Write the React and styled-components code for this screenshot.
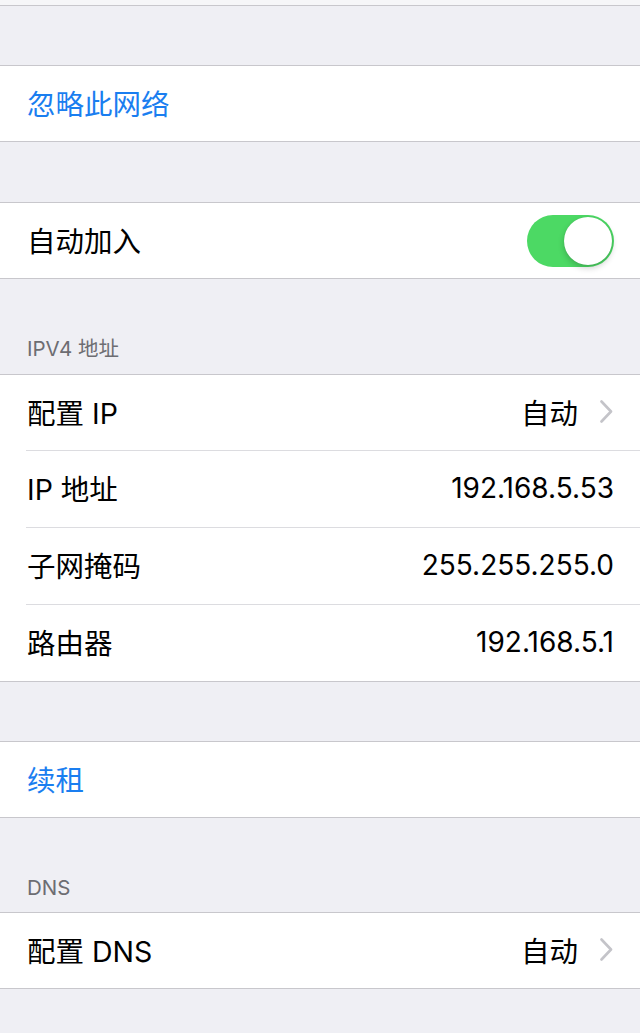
import React from "react";
import styled, { createGlobalStyle } from "styled-components";

const Global = createGlobalStyle`
  html, body {
    margin: 0;
    padding: 0;
    background: #efeff4;
  }
  body {
    font-family: "Inter", "Noto Sans CJK SC", sans-serif;
    -webkit-font-smoothing: antialiased;
  }
`;

const Page = styled.div`
  width: 640px;
  min-height: 1033px;
  background: #efeff4;
  display: flex;
  flex-direction: column;
`;

const TopStrip = styled.div`
  height: 5px;
  background: #f6f6f8;
  border-bottom: 1px solid #c8c7cc;
`;

const Gap = styled.div`
  height: ${(p) => p.$h}px;
`;

const SectionHeader = styled.div`
  height: ${(p) => p.$h}px;
  display: flex;
  align-items: flex-end;
  box-sizing: border-box;
  padding: 0 27px 12px;
  font-size: 20.5px;
  color: #6d6d72;
`;

const Group = styled.div`
  background: #fff;
  border-top: 1px solid #c8c7cc;
  border-bottom: 1px solid #c8c7cc;
  display: flex;
  flex-direction: column;
`;

const Row = styled.div`
  height: 75px;
  display: flex;
  align-items: center;
  padding: 0 26px 3px 27px;
  box-sizing: border-box;
  & + & {
    border-top: 1px solid #dcdce0;
    height: 77px;
    margin-left: 26px;
    padding-left: 1px;
  }
`;

const Label = styled.span`
  flex: 1;
  font-size: 28.5px;
  color: ${(p) => (p.$action ? "#1a7ef0" : "#000")};
`;

const Value = styled.span`
  font-size: ${(p) => (p.$num ? "28px" : "28.5px")};
  color: #000;
`;

const Chevron = styled.svg`
  width: 13px;
  height: 23px;
  margin-left: 22px;
  margin-right: 1px;
  flex: none;
`;

const Switch = styled.div`
  position: relative;
  width: 87px;
  height: 52px;
  border-radius: 26px;
  background: #4cd964;
  flex: none;
  margin-top: 3px;
`;

const Knob = styled.div`
  position: absolute;
  top: 2px;
  right: 2px;
  width: 48px;
  height: 48px;
  border-radius: 50%;
  background: #fff;
  box-shadow: 0 3px 6px rgba(0, 0, 0, 0.2), 0 0 1px rgba(0, 0, 0, 0.15);
`;

function Arrow() {
  return (
    <Chevron viewBox="0 0 13 23">
      <path
        d="M1.5 1.5 L11 11.5 L1.5 21.5"
        fill="none"
        stroke="#c4c4c9"
        strokeWidth="2.6"
        strokeLinecap="round"
        strokeLinejoin="round"
      />
    </Chevron>
  );
}

export default function App() {
  return (
    <Page>
      <Global />
      <TopStrip />
      <Gap $h={59} />
      <Group>
        <Row>
          <Label $action>忽略此网络</Label>
        </Row>
      </Group>
      <Gap $h={60} />
      <Group>
        <Row>
          <Label>自动加入</Label>
          <Switch>
            <Knob />
          </Switch>
        </Row>
      </Group>
      <SectionHeader $h={95}>IPV4 地址</SectionHeader>
      <Group>
        <Row>
          <Label>配置 IP</Label>
          <Value>自动</Value>
          <Arrow />
        </Row>
        <Row>
          <Label>IP 地址</Label>
          <Value $num>192.168.5.53</Value>
        </Row>
        <Row>
          <Label>子网掩码</Label>
          <Value $num>255.255.255.0</Value>
        </Row>
        <Row>
          <Label>路由器</Label>
          <Value $num>192.168.5.1</Value>
        </Row>
      </Group>
      <Gap $h={59} />
      <Group>
        <Row>
          <Label $action>续租</Label>
        </Row>
      </Group>
      <SectionHeader $h={94}>DNS</SectionHeader>
      <Group>
        <Row>
          <Label>配置 DNS</Label>
          <Value>自动</Value>
          <Arrow />
        </Row>
      </Group>
    </Page>
  );
}
